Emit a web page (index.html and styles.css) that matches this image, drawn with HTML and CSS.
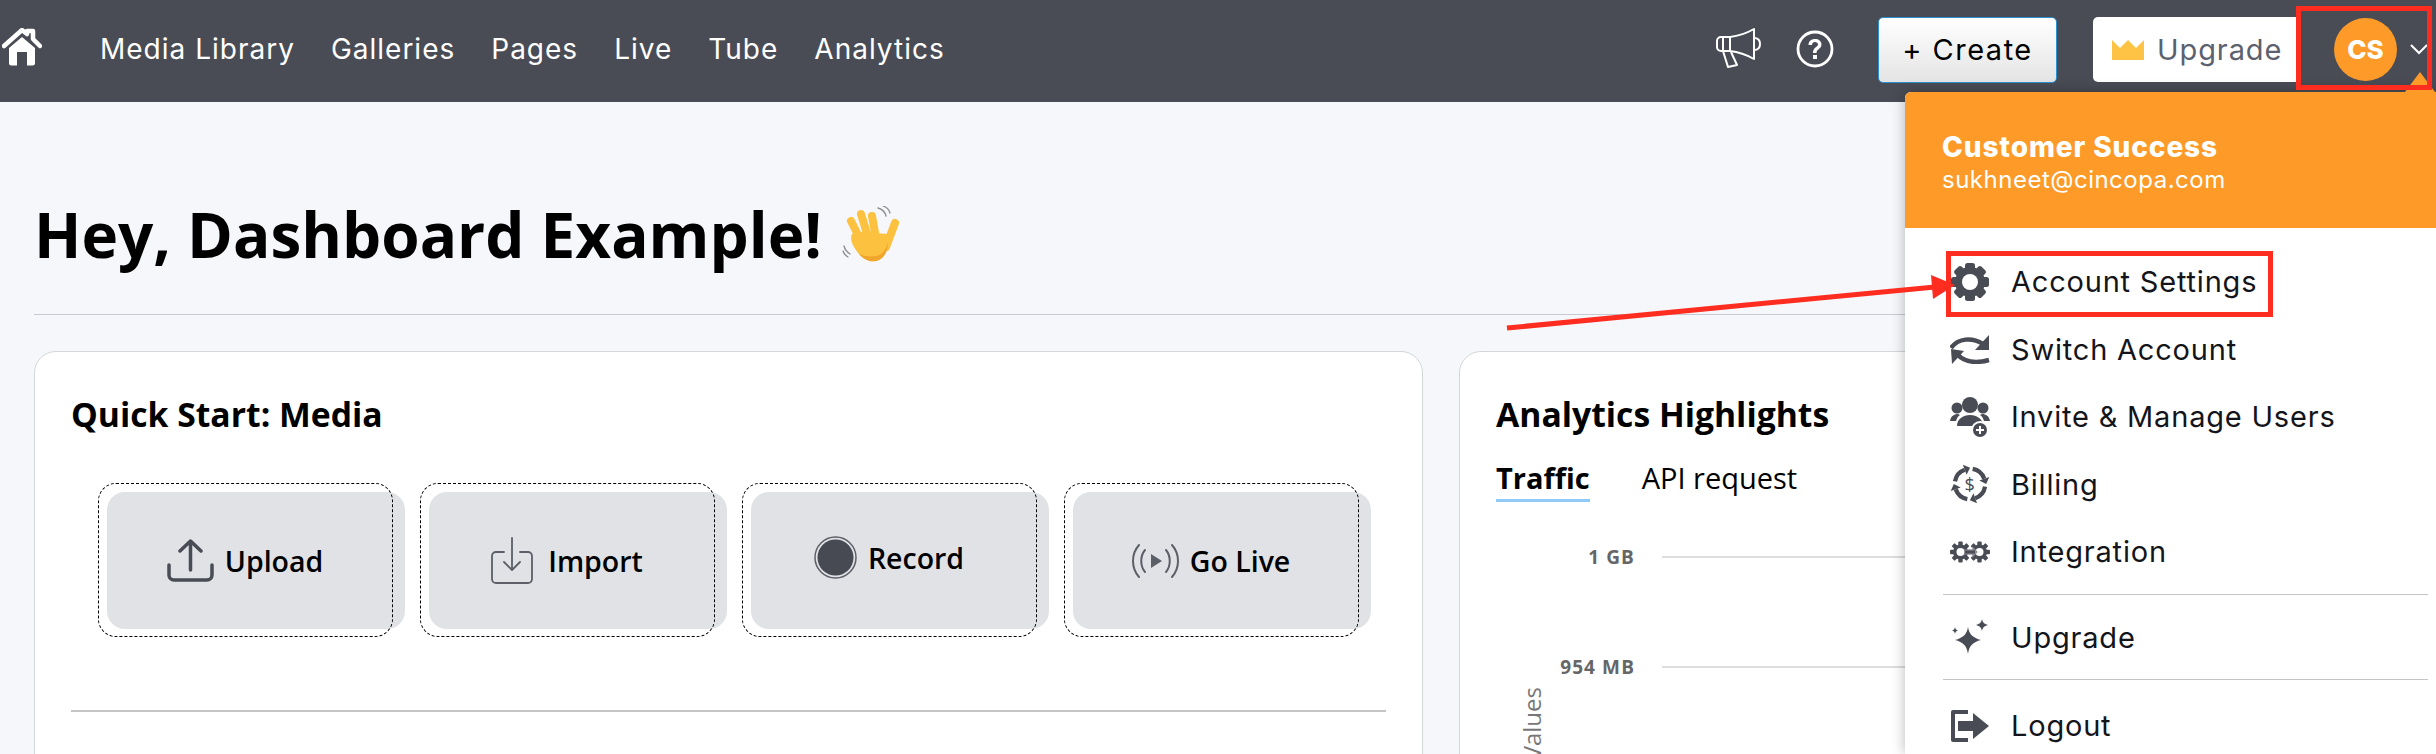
FILE: index.html
```html
<!DOCTYPE html>
<html>
<head>
  <title>Dashboard</title>
  <meta name="viewport" content="width=device-width, initial-scale=1">
  <link rel="stylesheet" href="styles.css">
</head>
<body>
  <header class="topbar">
    <a class="home-link" href="#">
      <svg width="40" height="38" viewBox="0 0 40 38"><path d="M2 18 20 2l5 4V3h6v8l7 7" fill="none" stroke="#fff" stroke-width="4.5" stroke-linecap="round" stroke-linejoin="round"/><path d="M20 9 7 20v15a2.500 2.500 0 0 0 2.500 2.500H15V24h10v13.500h5.500A2.500 2.500 0 0 0 33 35V20z" fill="#fff"/></svg>
    </a>
    <nav class="main-nav">
      <a href="#">Media Library</a>
      <a href="#">Galleries</a>
      <a href="#">Pages</a>
      <a href="#">Live</a>
      <a href="#">Tube</a>
      <a href="#">Analytics</a>
    </nav>
    <div class="top-actions">
      <svg class="megaphone" width="48" height="40" viewBox="0 0 48 40" fill="none" stroke="#fff" stroke-width="2" stroke-linejoin="round"><path d="M15 9H6a4 4 0 0 0-4 4v6a4 4 0 0 0 4 4h9z"/><path d="M8 9v14M15 9c9-1 17-4 24-8v30c-7-4-15-7-24-8z"/><path d="M39 10c5 0 6 3 6 6s-1 6-6 6"/><path d="M8 23l5 16 9-2-6-13"/></svg>
      <svg class="help" width="38" height="38" viewBox="0 0 38 38"><circle cx="19" cy="19" r="17" fill="none" stroke="#fff" stroke-width="2.800"/><path d="M12.500 15c0-4 3-6 6.500-6s6.500 2 6.500 5.500c0 4.500-5 4.500-5 8.500h-3.500c0-6 5-6 5-8.500 0-1.500-1.300-2.500-3-2.500s-3 1-3 3z" fill="#fff"/><rect x="17" y="25" width="4" height="4" fill="#fff"/></svg>
      <button class="create-btn">+ Create</button>
      <button class="upgrade-btn">
        <svg width="32" height="20" viewBox="0 0 32 20"><path d="M0 0l8 8 8-8 8 8 8-8v20H0z" fill="#fec244"/></svg>
        Upgrade
      </button>
      <div class="account">
        <span class="avatar">CS</span>
        <svg width="18" height="11" viewBox="0 0 18 11"><path d="M1 1l8 8 8-8" fill="none" stroke="#fff" stroke-width="2"/></svg>
      </div>
    </div>
  </header>

  <main class="page">
    <div class="greeting">
      <h1>Hey, Dashboard Example!</h1>
      <svg class="wave" width="60" height="58" viewBox="0 0 60 58">
        <g fill="none" stroke="#8a8a8a" stroke-width="1.300" stroke-linecap="round"><path d="M36 2c4 1 7 4 8 8M41 0c3 1 6 3 7 7M2 40c1 4 3 6 6 8M1 45c1 3 3 5 5 6"/></g>
        <g fill="none" stroke="#fcc13e" stroke-width="8" stroke-linecap="round"><path d="M9 15l10 20M19 8l8 26M30 10l4 22M53 17l-9 24"/></g>
        <path d="M10 28c-3 6 2 14 7 20 6 7 14 9 20 6 8-4 10-14 9-26L18 26z" fill="#fcc13e"/>
        <path d="M17 48c6 7 14 9 20 6 6-3 9-10 9-18-2 8-6 13-12 14-7 1-12 0-17-2z" fill="#f0a52c"/>
      </svg>
    </div>
    <hr class="page-rule">

    <div class="cards">
      <section class="card">
        <h2>Quick Start: Media</h2>
        <div class="tiles">
          <a class="tile" href="#">
            <svg width="47" height="43" viewBox="0 0 47 43" fill="none" stroke="#4a4c55" stroke-width="3.500" stroke-linecap="round" stroke-linejoin="round"><path d="M2 26v10a5 5 0 0 0 5 5h33a5 5 0 0 0 5-5V26"/><path d="M23.500 31V3M13 12l10.500-10L34 12"/></svg>
            <span>Upload</span>
          </a>
          <a class="tile tile-import" href="#">
            <svg width="42" height="47" viewBox="0 0 42 47" fill="none" stroke="#5d5f68" stroke-width="1.800" stroke-linecap="round" stroke-linejoin="round"><path d="M13 15H5a4 4 0 0 0-4 4v23a4 4 0 0 0 4 4h32a4 4 0 0 0 4-4V19a4 4 0 0 0-4-4h-8"/><path d="M21 1v32M13 25l8 8 8-8"/></svg>
            <span>Import</span>
          </a>
          <a class="tile tile-record" href="#">
            <svg width="43" height="43" viewBox="0 0 43 43"><circle cx="21.500" cy="21.500" r="20.500" fill="none" stroke="#5d5f68" stroke-width="1.500"/><circle cx="21.500" cy="21.500" r="18" fill="#474953"/></svg>
            <span>Record</span>
          </a>
          <a class="tile" href="#">
            <svg width="47" height="36" viewBox="0 0 47 36" fill="none" stroke="#5d5f68" stroke-width="2" stroke-linecap="round"><path d="M7 2C-1 11-1 25 7 34M13 7c-5 6-5 16 0 22M40 2c8 9 8 23 0 32M34 7c5 6 5 16 0 22"/><path d="M19 11l11 7-11 7z" fill="#5d5f68" stroke="none"/></svg>
            <span>Go Live</span>
          </a>
        </div>
        <hr class="card-rule">
      </section>

      <section class="card">
        <h2>Analytics Highlights</h2>
        <div class="tabs">
          <a class="tab tab-active" href="#">Traffic</a>
          <a class="tab" href="#">API request</a>
        </div>
        <div class="chart">
          <div class="axis-title"><span>Values</span></div>
          <div class="chart-rows">
            <div class="chart-row"><span>1 GB</span><i></i></div>
            <div class="chart-row"><span>954 MB</span><i></i></div>
          </div>
        </div>
      </section>
    </div>
  </main>

  <aside class="account-menu">
    <div class="menu-head">
      <strong>Customer Success</strong>
      <span>sukhneet@cincopa.com</span>
    </div>
    <ul class="menu-list">
      <li>
        <svg width="40" height="40" viewBox="0 0 40 40"><g fill="#4a4c55"><circle cx="20" cy="20" r="15"/><rect x="15" y="1" width="10" height="38" rx="2.500"/><rect x="15" y="1" width="10" height="38" rx="2.500" transform="rotate(45 20 20)"/><rect x="15" y="1" width="10" height="38" rx="2.500" transform="rotate(90 20 20)"/><rect x="15" y="1" width="10" height="38" rx="2.500" transform="rotate(135 20 20)"/></g><circle cx="20" cy="20" r="8" fill="#fff"/></svg>
        Account Settings
      </li>
      <li>
        <svg width="40" height="29" viewBox="0 0 40 29"><g fill="none" stroke="#4a4c55" stroke-width="4.500"><path d="M1 13C8 3 22 2 33 9"/><path d="M39 25C28 28 15 28 7 19"/></g><g fill="#4a4c55"><path d="M39 0v15H25z"/><path d="M1 14l13 2L2 29z"/></g></svg>
        Switch Account
      </li>
      <li>
        <svg width="40" height="42" viewBox="0 0 40 42"><g fill="#4a4c55"><circle cx="20" cy="9" r="8"/><circle cx="7" cy="12" r="5.500"/><circle cx="33" cy="12" r="5.500"/><path d="M0 25c1-5 4-7 8-7l2 1c-2 1-3 3-4 6zM40 25c-1-5-4-7-8-7l-2 1c2 1 3 3 4 6z"/><path d="M7 30c0-7 6-11 13-11s13 4 13 11z"/><circle cx="30" cy="34" r="8" stroke="#fff" stroke-width="2"/></g><path d="M30 30v8M26 34h8" stroke="#fff" stroke-width="2"/></svg>
        Invite &amp; Manage Users
      </li>
      <li>
        <svg width="40" height="40" viewBox="-1 -1 42 42"><defs><g id="bill-arrow"><path d="M22.800 4.200A16 16 0 0 1 35 14.500" fill="none" stroke="#4a4c55" stroke-width="4.500"/><path d="M37 20.100 40.200 12.600 29.800 16.400z" fill="#4a4c55"/></g></defs><use href="#bill-arrow"/><use href="#bill-arrow" transform="rotate(90 20 20)"/><use href="#bill-arrow" transform="rotate(180 20 20)"/><use href="#bill-arrow" transform="rotate(270 20 20)"/><text class="billing-mark" x="20" y="27" text-anchor="middle">$</text></svg>
        Billing
      </li>
      <li>
        <svg width="40" height="22" viewBox="0 0 40 22"><defs><g id="cog" fill="#4a4c55"><circle cx="0" cy="0" r="7.500"/><rect x="-2.200" y="-10.500" width="4.400" height="21" rx="1"/><rect x="-2.200" y="-10.500" width="4.400" height="21" rx="1" transform="rotate(45)"/><rect x="-2.200" y="-10.500" width="4.400" height="21" rx="1" transform="rotate(90)"/><rect x="-2.200" y="-10.500" width="4.400" height="21" rx="1" transform="rotate(135)"/><circle cx="0" cy="0" r="4" fill="#fff"/></g></defs><use href="#cog" x="10.500" y="11"/><use href="#cog" x="29.500" y="11"/><path d="M14 9h10M14 13h10M22 6l5 5-5 5" fill="none" stroke="#8b8d95" stroke-width="1.200"/></svg>
        Integration
      </li>
      <li class="menu-sep"></li>
      <li>
        <svg width="40" height="36" viewBox="0 0 38 36" fill="#4a4c55"><path d="M17 8c1 7 5 11 13 13-8 2-12 6-13 14-1-8-5-12-13-14 8-2 12-6 13-13z"/><path d="M31 0c.5 3 2 5 6 6-4 1-5.500 3-6 6-.5-3-2-5-6-6 4-1 5.500-3 6-6z"/><path d="M4 8c.3 2 1 3 3 3.500-2 .5-2.700 1.500-3 3.500-.3-2-1-3-3-3.500 2-.5 2.700-1.500 3-3.500z"/></svg>
        Upgrade
      </li>
      <li class="menu-sep"></li>
      <li>
        <svg width="40" height="32" viewBox="0 0 38 32" fill="#4a4c55"><path d="M0 2a2 2 0 0 1 2-2h15v4H4v24h13v4H2a2 2 0 0 1-2-2z"/><path d="M7 11h15V3l16 13-16 13v-8H7z"/></svg>
        Logout
      </li>
    </ul>
  </aside>

  <svg class="annotations" width="2436" height="754" viewBox="0 0 2436 754">
    <g fill="none" stroke="#ff2c20" stroke-width="5">
      <rect x="2298.500" y="8.500" width="131" height="79"/>
      <rect x="1948.500" y="253.500" width="322" height="61"/>
      <path d="M1507 328 1935 287"/>
    </g>
    <path d="M1931 275 1955 285 1933 299z" fill="#ff2c20"/>
  </svg>
</body>
</html>
```

FILE: styles.css
```css
* {
  box-sizing: border-box;
}

body {
  margin: 0;
  height: 100vh;
  overflow: hidden;
  position: relative;
  background-color: #f5f7fb;
  font-family: "Open Sans", sans-serif;
  color: #000;
}

a {
  color: inherit;
  text-decoration: none;
}

/* Top bar */
.topbar {
  display: flex;
  align-items: center;
  height: 102px;
  padding-left: 2px;
  background-color: #4a4c55;
}

.home-link {
  display: flex;
  margin-bottom: 8px;
}

.main-nav {
  display: flex;
  gap: 36px;
  margin-left: 58px;
  margin-bottom: 4px;
  font-family: Inter, sans-serif;
  font-size: 28px;
  letter-spacing: 1px;
  color: #fff;
}

.top-actions {
  display: flex;
  align-items: center;
  margin-left: auto;
  height: 100%;
}

.megaphone {
  margin-bottom: 6px;
}

.help {
  margin-left: 33px;
  margin-bottom: 4px;
}

.create-btn {
  width: 179px;
  height: 66px;
  margin-left: 44px;
  margin-bottom: 3px;
  border: 1px solid #2c8fd0;
  border-radius: 5px;
  background: linear-gradient(#fff, #e4e4e4);
  font-family: Inter, sans-serif;
  font-size: 29px;
  letter-spacing: 1.500px;
  color: #000;
}

.upgrade-btn {
  display: flex;
  align-items: center;
  gap: 13px;
  width: 204px;
  height: 65px;
  margin-left: 36px;
  margin-bottom: 3px;
  padding: 0 0 0 19px;
  border: none;
  border-radius: 5px 0 0 5px;
  background-color: #fff;
  font-family: Inter, sans-serif;
  font-size: 29px;
  letter-spacing: 0.900px;
  color: #5c6170;
}

.account {
  display: flex;
  align-items: center;
  width: 139px;
  padding-left: 37px;
  gap: 13px;
  margin-bottom: 3px;
}

.avatar {
  display: flex;
  align-items: center;
  justify-content: center;
  width: 63px;
  height: 63px;
  border-radius: 50%;
  background-color: #fd9a28;
  font-family: Inter, sans-serif;
  font-size: 26px;
  font-weight: 800;
  color: #fff;
}

/* Page */
.page {
  padding: 0 0 0 34px;
}

.greeting {
  display: flex;
  align-items: center;
  gap: 20px;
  height: 212px;
  padding-top: 52px;
}

.greeting h1 {
  margin: 0;
  font-size: 62px;
  font-weight: 700;
}

.wave {
  margin-top: 2px;
}

.page-rule {
  height: 1px;
  margin: 0;
  border: none;
  background-color: #c8cad2;
}

.cards {
  display: grid;
  grid-template-columns: 1389px 1100px;
  gap: 36px;
  margin-top: 36px;
}

.card {
  height: 600px;
  padding: 37px 36px;
  border: 1px solid #d5d6da;
  border-radius: 22px;
  background-color: #fff;
}

.card h2 {
  margin: 0;
  font-size: 33.700px;
  font-weight: 700;
  line-height: 50px;
}

/* Quick start tiles */
.tiles {
  display: flex;
  gap: 24px;
  margin-top: 53px;
  padding-left: 36px;
}

.tile {
  position: relative;
  display: flex;
  align-items: center;
  justify-content: center;
  gap: 11px;
  width: 298px;
  height: 137px;
  padding-right: 22px;
  border-radius: 18px;
  background-color: #e1e2e6;
  font-size: 28.500px;
  font-weight: 600;
}

.tile::after {
  content: "";
  position: absolute;
  top: -9px;
  bottom: -8px;
  left: -9px;
  right: 12px;
  border: 1px dashed #000;
  border-radius: 18px;
}

.tile-import {
  gap: 15px;
}

.tile-record span {
  margin-bottom: 6px;
}

.tile-record svg {
  margin-bottom: 6px;
}

.card-rule {
  height: 2px;
  margin: 81px 0 0;
  border: none;
  background-color: #c4c4c4;
}

/* Analytics */
.tabs {
  display: flex;
  gap: 52px;
  margin-top: 19px;
  font-size: 29px;
}

.tab {
  padding-bottom: 2px;
  height: 44px;
}

.tab-active {
  font-weight: 700;
  border-bottom: 3px solid #90caf9;
}

.chart {
  display: flex;
}

.axis-title {
  width: 50px;
  padding-top: 185px;
  padding-left: 19px;
  font-size: 24px;
  color: #777;
}

.axis-title span {
  display: block;
  writing-mode: vertical-rl;
  transform: rotate(180deg);
}

.chart-rows {
  flex: 1;
}

.chart-row {
  display: flex;
  align-items: center;
  height: 110px;
}

.chart-row span {
  width: 89px;
  margin-right: 27px;
  text-align: right;
  white-space: nowrap;
  font-size: 19px;
  font-weight: 700;
  letter-spacing: 1.100px;
  color: #666;
}

.chart-row i {
  flex: 1;
  height: 2px;
  background-color: #ddd;
}

/* Account dropdown */
.account-menu {
  position: absolute;
  top: 92px;
  left: 1905px;
  right: 0;
  bottom: 0;
  border-top-left-radius: 6px;
  background-color: #fff;
  box-shadow: 0 0 14px rgba(0, 0, 0, 0.28);
  font-family: Inter, sans-serif;
}

.account-menu::before {
  content: "";
  position: absolute;
  top: -20px;
  left: 500px;
  border-left: 15px solid transparent;
  border-right: 15px solid transparent;
  border-bottom: 20px solid #fd9a28;
}

.menu-head {
  display: flex;
  flex-direction: column;
  justify-content: center;
  height: 136px;
  padding: 4px 0 0 37px;
  background-color: #fd9a28;
  border-top-left-radius: 6px;
  color: #fff;
}

.menu-head strong {
  font-size: 28px;
  font-weight: 800;
  letter-spacing: 0.900px;
}

.menu-head span {
  margin-top: 1px;
  font-size: 24px;
  letter-spacing: 0.500px;
}

.menu-list {
  list-style: none;
  margin: 0;
  padding: 20px 0 0 45px;
}

.menu-list li {
  display: flex;
  align-items: center;
  height: 67.500px;
  font-size: 29px;
  letter-spacing: 0.800px;
  color: #14151a;
}

.menu-list li:last-child {
  padding-top: 6px;
}

.menu-list li svg {
  flex: none;
  margin-right: 21px;
}

.menu-list .menu-sep {
  height: 1px;
  margin: 8px 8px 9px -7px;
  background-color: #c4c4c4;
}

.billing-mark {
  font-family: "Open Sans", sans-serif;
  font-size: 19px;
  fill: #4a4c55;
}

/* Red callouts on top of the screenshot */
.annotations {
  position: absolute;
  top: 0;
  left: 0;
  pointer-events: none;
}
```
